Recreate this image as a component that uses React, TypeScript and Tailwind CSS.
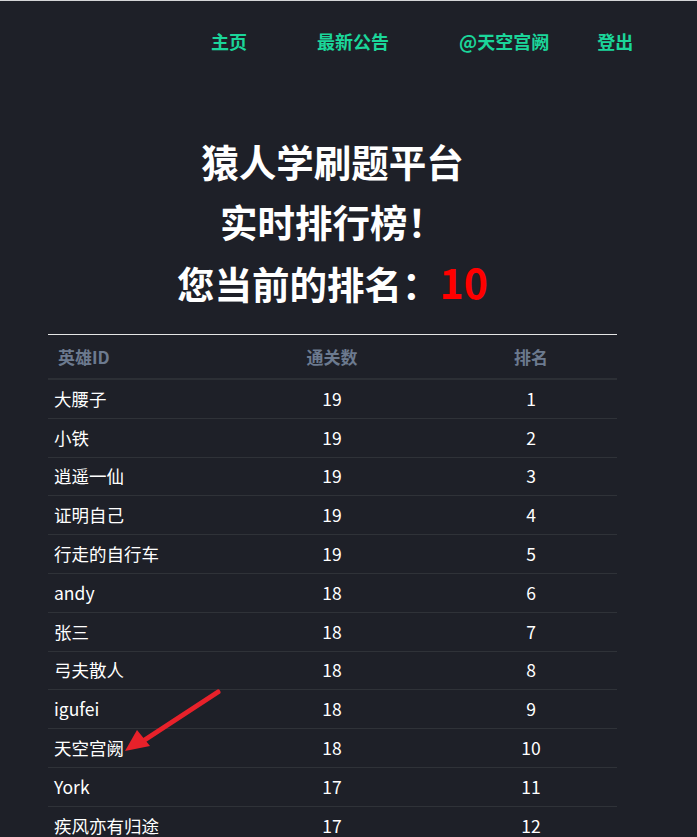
const rows: [string, number, number][] = [
  ['大腰子', 19, 1],
  ['小铁', 19, 2],
  ['逍遥一仙', 19, 3],
  ['证明自己', 19, 4],
  ['行走的自行车', 19, 5],
  ['andy', 18, 6],
  ['张三', 18, 7],
  ['弓夫散人', 18, 8],
  ['igufei', 18, 9],
  ['天空宫阙', 18, 10],
  ['York', 17, 11],
  ['疾风亦有归途', 17, 12],
];

export default function App() {
  return (
    <div
      className="h-[837px] overflow-hidden bg-[#1e2028] border-t border-[#d4d5d7] text-white"
      style={{ fontFamily: '"Noto Sans CJK SC", "Noto Sans", sans-serif' }}
    >
      {/* 导航 */}
      <nav className="flex pl-[211px] pt-[28px] text-[18px] font-bold text-[#1bd69a] leading-6">
        <a>主页</a>
        <a className="ml-[70px]">最新公告</a>
        <a className="ml-[70px]">@天空宫阙</a>
        <a className="ml-[48px]">登出</a>
      </nav>

      <div className="relative ml-[48px] w-[569px] pt-[78px]">
        {/* 标题 */}
        <div className="text-center text-[37.5px] font-bold leading-[60px]">
          <h1>猿人学刷题平台</h1>
          <h2>实时排行榜！</h2>
          <h2>
            您当前的排名：<span className="text-[41px] text-[#ff0000]">10</span>
          </h2>
        </div>

        {/* 排行榜 */}
        <div className="mt-[21px] border-t border-[#e5e5e5]">
          <div className="grid h-[45px] grid-cols-[171px_226px_172px] items-center border-b-2 border-[#2c2f35] text-[17px] font-bold text-[#6c7a8f]">
            <div className="pl-[10px]">英雄ID</div>
            <div className="text-center">通关数</div>
            <div className="text-center">排名</div>
          </div>
          {rows.map(([name, score, rank]) => (
            <div
              key={rank}
              className="grid h-[38.8px] grid-cols-[171px_226px_172px] items-center border-b border-[#2f3238] text-[17.5px]"
            >
              <div className="pl-[6px]">{name}</div>
              <div className="text-center">{score}</div>
              <div className="text-center">{rank}</div>
            </div>
          ))}
        </div>

        {/* 标注箭头 */}
        <svg
          className="pointer-events-none absolute left-[70px] top-[632px]"
          width="110"
          height="80"
          viewBox="0 0 110 80"
        >
          <line x1="100" y1="7" x2="22" y2="58" stroke="#e8212a" strokeWidth="5" strokeLinecap="round" />
          <polygon points="7,66 19,45 32,61" fill="#e8212a" />
        </svg>
      </div>
    </div>
  );
}
